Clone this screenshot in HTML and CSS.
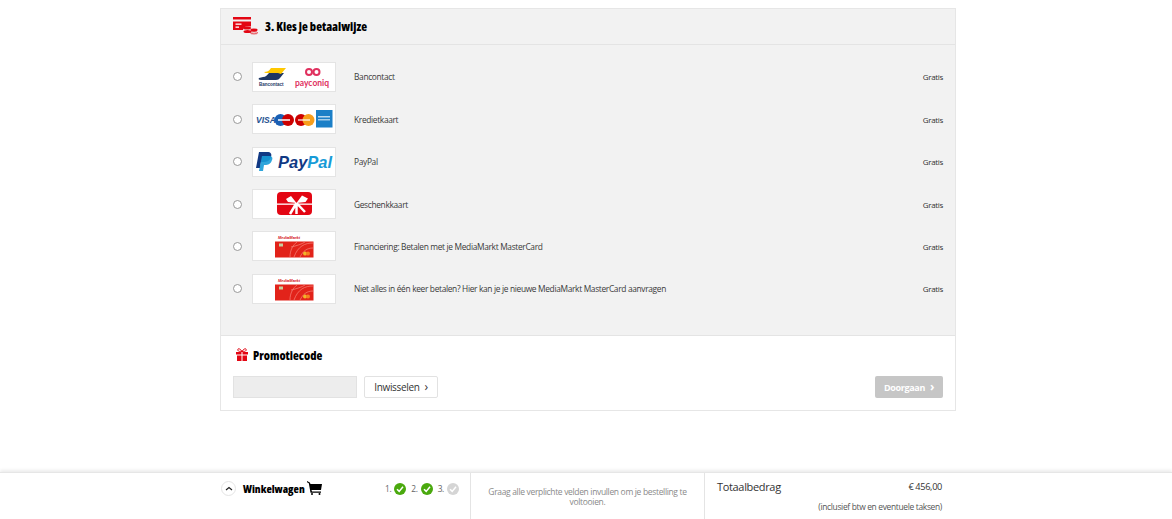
FILE: index.html
```html
<!DOCTYPE html>
<html lang="nl">
<head>
<meta charset="utf-8">
<title>Kies je betaalwijze</title>
<link rel="stylesheet" href="styles.css">
</head>
<body>
<main class="main">
  <section class="card">
    <header class="card-head">
      <svg class="head-icon" width="26" height="18" viewBox="0 0 26 18">
        <rect x="0" y="0" width="18" height="2.500" fill="#e30613"/>
        <path d="M0 4.500h18v5h-4c-2 0-4 1-4 3.500H0z" fill="#e30613"/>
        <rect x="2.500" y="6.500" width="6" height="1.300" fill="#fff"/>
        <rect x="2.500" y="9.500" width="3.500" height="1.300" fill="#fff"/>
        <ellipse cx="14" cy="11" rx="4" ry="1.500" fill="#e30613"/>
        <ellipse cx="14.500" cy="14.500" rx="4" ry="1.600" fill="#e30613"/>
        <ellipse cx="21" cy="13" rx="3.600" ry="1.400" fill="#e30613"/>
        <ellipse cx="21" cy="15.800" rx="3.600" ry="1.100" fill="none" stroke="#e30613" stroke-width=".8"/>
      </svg>
      <h2 class="head-title">3. Kies je betaalwijze</h2>
    </header>
    <div class="methods">
      <label class="method">
        <span class="radio"></span>
        <span class="logo">
          <svg width="82" height="28" viewBox="0 0 82 28">
            <path d="M6 15l4-1c3 0 4-2 6-4h15l-4 5c-1 1-2 2-4 2H8c-2 0-3-1-2-2z" fill="#1e3764"/>
            <path d="M11 9c3 0 5-1 7-4h15l-5 6c-1 0-2-1-3-1H15c-2 0-3 0-4-1z" fill="#ffc800"/>
            <text x="6" y="22.500" class="bc-text">Bancontact</text>
            <circle cx="56" cy="9" r="3" fill="none" stroke="#e0315f" stroke-width="2"/>
            <circle cx="63.500" cy="9" r="3" fill="none" stroke="#e0315f" stroke-width="2"/>
            <text x="42" y="22.500" class="pq-text">payconiq</text>
          </svg>
        </span>
        <span class="name">Bancontact</span>
        <span class="price">Gratis</span>
      </label>
      <label class="method">
        <span class="radio"></span>
        <span class="logo">
          <svg width="82" height="28" viewBox="0 0 82 28">
            <text x="3" y="18" class="visa-text">VISA</text>
            <circle cx="27.500" cy="15" r="6" fill="#1a5fb4"/>
            <circle cx="35" cy="15" r="6" fill="#cc0000"/>
            <rect x="25" y="14" width="12" height="2" fill="#fff" opacity=".75"/>
            <circle cx="48" cy="15" r="6" fill="#cc0000"/>
            <circle cx="55.500" cy="15" r="6" fill="#f79e1b"/>
            <rect x="45" y="14" width="12" height="2" fill="#fff" opacity=".6"/>
            <rect x="63" y="5" width="16.500" height="17.500" fill="#1b7fc7"/>
            <rect x="65" y="11" width="12" height="1.500" fill="#fff" opacity=".7"/>
            <rect x="65" y="14" width="12" height="1.500" fill="#fff" opacity=".6"/>
          </svg>
        </span>
        <span class="name">Kredietkaart</span>
        <span class="price">Gratis</span>
      </label>
      <label class="method">
        <span class="radio"></span>
        <span class="logo">
          <svg width="82" height="28" viewBox="0 0 82 28">
            <path d="M6 4h8c4 0 5 2 4 5-1 4-4 5-8 5H8l-1 6H3z" fill="#113984"/>
            <path d="M9 8h7c3 0 4 2 3 4-1 4-4 5-7 5h-1l-1 6H6z" fill="#179bd7" opacity=".9"/>
            <text x="25" y="20" class="pp-text"><tspan fill="#113984">Pay</tspan><tspan fill="#179bd7">Pal</tspan></text>
          </svg>
        </span>
        <span class="name">PayPal</span>
        <span class="price">Gratis</span>
      </label>
      <label class="method">
        <span class="radio"></span>
        <span class="logo">
          <svg width="82" height="28" viewBox="0 0 82 28">
            <rect x="24" y="2" width="35" height="23" rx="4" fill="#e30613"/>
            <rect x="24" y="13.500" width="35" height="1.300" fill="#fff"/>
            <path d="M43.500 13L38 6l-5 3 2 3zM43.500 13L49 5.500l6 3-2.500 3.500z" fill="#fff"/>
            <path d="M43.500 13L37 24M43.500 13v11M43.500 13L52 22" stroke="#fff" stroke-width="2.500" fill="none"/>
          </svg>
        </span>
        <span class="name">Geschenkkaart</span>
        <span class="price">Gratis</span>
      </label>
      <label class="method">
        <span class="radio"></span>
        <span class="logo">
          <svg width="82" height="28" viewBox="0 0 82 28">
            <text x="25" y="7" class="mm-text">MediaMarkt</text>
            <rect x="22" y="9.500" width="38.500" height="16" fill="#e2231a"/>
            <path d="M60 11c-8 0-15 3-19 14M60 16c-6 0-10 3-13 9M44 10c-4 3-7 8-7 15M52 10c-3 2-9 4-14 5" stroke="#f47a70" stroke-width=".8" fill="none"/>
            <rect x="26" y="11.500" width="4" height="3" fill="#c5cf9f"/>
            <circle cx="52" cy="21.500" r="2" fill="#f0b429"/>
            <circle cx="55" cy="21.500" r="2" fill="#f58220"/>
          </svg>
        </span>
        <span class="name">Financiering: Betalen met je MediaMarkt MasterCard</span>
        <span class="price">Gratis</span>
      </label>
      <label class="method">
        <span class="radio"></span>
        <span class="logo">
          <svg width="82" height="28" viewBox="0 0 82 28">
            <text x="25" y="7" class="mm-text">MediaMarkt</text>
            <rect x="22" y="9.500" width="38.500" height="16" fill="#e2231a"/>
            <path d="M60 11c-8 0-15 3-19 14M60 16c-6 0-10 3-13 9M44 10c-4 3-7 8-7 15M52 10c-3 2-9 4-14 5" stroke="#f47a70" stroke-width=".8" fill="none"/>
            <rect x="26" y="11.500" width="4" height="3" fill="#c5cf9f"/>
            <circle cx="52" cy="21.500" r="2" fill="#f0b429"/>
            <circle cx="55" cy="21.500" r="2" fill="#f58220"/>
          </svg>
        </span>
        <span class="name">Niet alles in één keer betalen? Hier kan je je nieuwe MediaMarkt MasterCard aanvragen</span>
        <span class="price">Gratis</span>
      </label>
    </div>
    <div class="promo">
      <div class="promo-head">
        <svg width="14" height="14" viewBox="0 0 14 14">
          <path d="M7 3.500C5 0 2 0 3 2.500 3.500 3.500 5 3.500 7 3.500c2 0 3.500 0 4-1C12 0 9 0 7 3.500z" fill="none" stroke="#e30613" stroke-width="1"/>
          <path d="M1 4h5.500v2.500H1zM7.500 4H13v2.500H7.500zM2 7.500h4.500V13H2zM7.500 7.500H12V13H7.500z" fill="#e30613"/>
        </svg>
        <h3 class="promo-title">Promotiecode</h3>
      </div>
      <div class="promo-row">
        <div class="promo-input"></div>
        <button class="btn-outline" type="button">Inwisselen<span class="chev">›</span></button>
        <button class="btn-next" type="button">Doorgaan<span class="chev">›</span></button>
      </div>
    </div>
  </section>
</main>
<footer class="footer">
  <div class="foot-inner">
    <div class="foot-cart">
      <span class="toggle">
        <svg width="8" height="5" viewBox="0 0 8 5"><path d="M1 4l3-2.500L7 4" fill="none" stroke="#222" stroke-width="1.200"/></svg>
      </span>
      <span class="cart-title">Winkelwagen</span>
      <svg class="cart-icon" width="15" height="14" viewBox="0 0 15 14">
        <path d="M0 0l2.800 1.500.7 1.500H15l-1 6H4.500L5 10.500h9v1.200H3.500L1.800 2.200 0 1.200z" fill="#000"/>
        <circle cx="5" cy="13" r="1" fill="#000"/>
        <circle cx="12.500" cy="13" r="1" fill="#000"/>
      </svg>
      <ol class="steps">
        <li class="step">1.
          <svg width="12" height="12" viewBox="0 0 12 12"><circle cx="6" cy="6" r="6" fill="#4aa90e"/><path d="M3 6.200l2.200 2.200L9 3.800" fill="none" stroke="#fff" stroke-width="1.500"/></svg>
        </li>
        <li class="step">2.
          <svg width="12" height="12" viewBox="0 0 12 12"><circle cx="6" cy="6" r="6" fill="#4aa90e"/><path d="M3 6.200l2.200 2.200L9 3.800" fill="none" stroke="#fff" stroke-width="1.500"/></svg>
        </li>
        <li class="step">3.
          <svg width="12" height="12" viewBox="0 0 12 12"><circle cx="6" cy="6" r="6" fill="#d5d5d5"/><path d="M3 6.200l2.200 2.200L9 3.800" fill="none" stroke="#fff" stroke-width="1.500"/></svg>
        </li>
      </ol>
    </div>
    <p class="foot-msg">Graag alle verplichte velden invullen om je bestelling te voltooien.</p>
    <div class="foot-total">
      <div class="total-row">
        <span class="total-label">Totaalbedrag</span>
        <span class="total-value">€ 456,00</span>
      </div>
      <div class="total-note">(inclusief btw en eventuele taksen)</div>
    </div>
  </div>
</footer>
</body>
</html>
```
FILE: styles.css
```css
* { box-sizing: border-box; }
html, body { height: 100%; }
body {
  margin: 0;
  height: 519px;
  overflow: hidden;
  display: flex;
  flex-direction: column;
  background: #fff;
  color: #333;
  font-family: "Open Sans", Lato, sans-serif;
  font-size: 8.400px;
  letter-spacing: -0.04em;
}
.main { flex: 1; padding-top: 8px; }
.card {
  width: 736px;
  margin-left: 220px;
  border: 1px solid #e6e6e6;
  height: 403px;
  display: flex;
  flex-direction: column;
}
.card-head {
  height: 36px;
  flex: none;
  background: #f2f2f2;
  border-bottom: 1px solid #e4e4e4;
  display: flex;
  align-items: center;
  padding-left: 12px;
  gap: 6px;
}
.head-icon { margin-top: -1px; }
.head-title, .promo-title, .cart-title {
  margin: 0;
  color: #000;
  font-weight: 800;
  font-stretch: 75%;
  letter-spacing: 0;
}
.head-title { font-size: 12px; }
.methods {
  flex: 1;
  background: #f2f2f2;
  padding-top: 10.700px;
  border-bottom: 1px solid #e4e4e4;
}
.method {
  height: 42.400px;
  display: grid;
  grid-template-columns: 9px 84px 1fr auto;
  align-items: center;
  padding: 0 12px;
}
.radio {
  width: 9px;
  height: 9px;
  border: 1px solid #999;
  border-radius: 50%;
  background: #fff;
}
.logo {
  width: 84px;
  height: 30px;
  margin-left: 10px;
  background: #fff;
  border: 1px solid #e4e4e4;
  display: flex;
  letter-spacing: 0;
}
.logo svg { display: block; }
.name { margin-left: 28px; color: #3a3a3a; }
.price { color: #333; font-size: 8px; }
.bc-text { font: 700 4.500px "Liberation Sans", sans-serif; fill: #1e3764; }
.pq-text { font: 700 8.500px Lato, sans-serif; fill: #e0315f; }
.visa-text { font: italic 700 8.500px "Liberation Sans", sans-serif; fill: #26508f; }
.pp-text { font: italic 700 16.500px "Liberation Sans", sans-serif; }
.mm-text { font: italic 700 4px "Liberation Sans", sans-serif; fill: #d3141b; }
.promo {
  flex: none;
  height: 74px;
  padding: 10px 12px 0;
}
.promo-head {
  display: flex;
  align-items: center;
  gap: 4px;
  height: 18px;
  margin-left: 2px;
}
.promo-title { font-size: 12px; }
.promo-row {
  display: flex;
  align-items: center;
  margin-top: 12px;
  height: 22px;
}
.promo-input {
  width: 124px;
  height: 22px;
  background: #ededed;
  border: 1px solid #e2e2e2;
}
.btn-outline {
  margin-left: 7px;
  width: 74px;
  height: 22px;
  background: #fff;
  border: 1px solid #e2e2e2;
  border-radius: 2px;
  color: #333;
  font-family: inherit;
  letter-spacing: inherit;
  font-size: 10px;
  padding: 0;
}
.btn-next {
  margin-left: auto;
  width: 68px;
  height: 22px;
  background: #c6c6c6;
  border: 0;
  border-radius: 2px;
  color: #fff;
  font-family: inherit;
  letter-spacing: inherit;
  font-weight: 700;
  font-size: 9px;
  padding: 0;
}
.chev { margin-left: 5px; font-size: 12px; line-height: 1; }
.footer {
  height: 47px;
  border-top: 1px solid #e6e6e6;
  box-shadow: 0 -2px 3px rgba(0, 0, 0, 0.08);
  background: #fff;
}
.foot-inner {
  margin-left: 220px;
  width: 736px;
  height: 100%;
  display: grid;
  grid-template-columns: 251px 234px 1fr;
}
.foot-cart {
  display: flex;
  align-items: flex-start;
  padding-top: 8px;
  border-right: 1px solid #e4e4e4;
}
.toggle {
  width: 15px;
  height: 15px;
  border: 1px solid #e4e4e4;
  border-radius: 50%;
  display: flex;
  align-items: center;
  justify-content: center;
  margin-left: 1px;
}
.cart-title { font-size: 11px; margin-left: 7px; line-height: 15px; }
.cart-icon { margin-left: 2px; }
.steps {
  list-style: none;
  margin: 2px 0 0 auto;
  padding: 0 11px 0 0;
  display: flex;
  gap: 5px;
  color: #666;
}
.step { display: flex; align-items: center; gap: 3px; line-height: 12px; }
.foot-msg {
  margin: 0;
  padding: 14px 12px 0;
  text-align: center;
  color: #8a8a8a;
  line-height: 10px;
  font-size: 8.500px;
  border-right: 1px solid #e4e4e4;
}
.foot-total { padding: 6px 14px 0 12px; }
.total-row { display: flex; justify-content: space-between; align-items: center; }
.total-label { font-size: 11px; color: #333; }
.total-value { font-size: 9.200px; color: #333; }
.total-note { text-align: right; margin-top: 7px; color: #555; font-size: 8.450px; }
```
